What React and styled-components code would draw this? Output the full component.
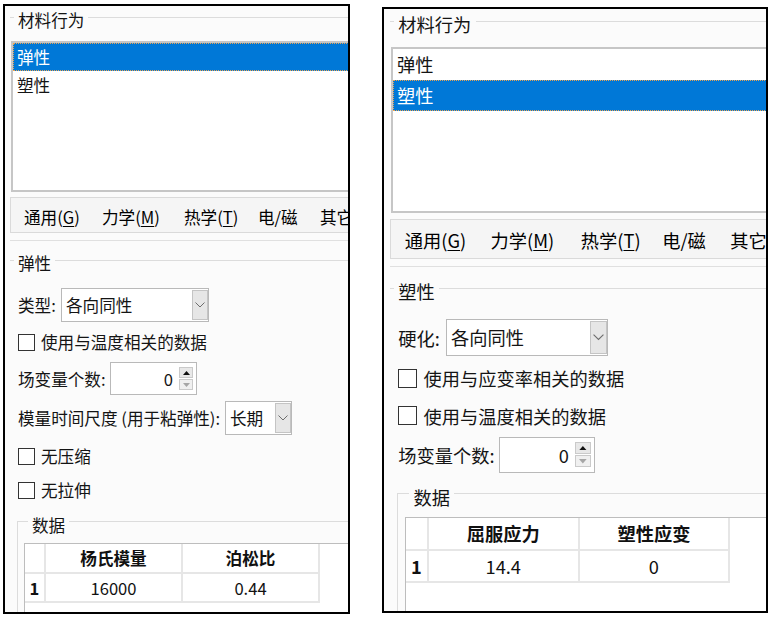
import React from "react";
import styled, { createGlobalStyle, css } from "styled-components";

const GlobalStyle = createGlobalStyle`
  html, body {
    margin: 0;
    padding: 0;
    background: #fff;
  }
  body {
    font-family: "Noto Sans CJK SC", "Microsoft YaHei", sans-serif;
    font-size: 16.6px;
    color: #141414;
  }
  * {
    box-sizing: border-box;
  }
`;

const Page = styled.div`
  display: flex;
  align-items: flex-start;
  width: 774px;
  height: 617px;
  padding: 4px 0 0 3px;
  overflow: hidden;
`;

const Slot = styled.div`
  padding-top: ${p => p.top || 0}px;
  margin-left: ${p => p.left || 0}px;
`;

const Panel = styled.div`
  zoom: ${p => p.zoom || 1};
  width: ${p => p.w}px;
  height: ${p => p.h}px;
  border: 2px solid #000;
  background: #fbfbfb;
  overflow: hidden;
  display: flex;
  flex-direction: column;
`;

const Group = styled.div`
  position: relative;
  flex: ${p => (p.grow ? 1 : "none")};
  display: flex;
  flex-direction: column;
  margin: ${p => p.mt || 0}px 0 0 ${p => p.ml || 0}px;
  padding-left: ${p => p.pl || 0}px;
  border-top: 1px solid #dcdcdc;
  border-left: ${p => (p.boxed ? "1px solid #dcdcdc" : "none")};
  min-height: 0;
`;

const GroupLabel = styled.span`
  position: absolute;
  left: ${p => p.left}px;
  top: ${p => p.top}px;
  padding: 0 4px;
  line-height: 20px;
  background: #fbfbfb;
  white-space: nowrap;
`;

const ListBox = styled.div`
  flex: none;
  width: 400px;
  height: 151px;
  margin: 23px 0 0 1px;
  background: #fff;
  border: 2px solid #c6c6c6;
`;

const ListItem = styled.div`
  height: 28px;
  line-height: 28px;
  padding-left: 4px;
  ${p =>
    p.selected &&
    css`
      background: #0078d7;
      color: #fff;
      outline: 1px dotted #e9a352;
      outline-offset: -1px;
    `}
`;

const TabBar = styled.div`
  flex: none;
  display: flex;
  align-items: center;
  height: 36px;
  margin: 5px 0 0 5px;
  padding: 3px 0 0 2px;
  background: #f5f5f5;
  border: 1px solid #dadada;
  border-right: none;
  white-space: nowrap;
`;

const Tab = styled.div`
  flex: none;
  width: ${p => (p.w ? `${p.w}px` : "auto")};
  padding-left: 11px;
  line-height: 20px;
  color: #000;

  u {
    text-decoration-thickness: 1px;
    text-underline-offset: 2px;
  }
`;

const Pane = styled.div`
  flex: 1;
  display: flex;
  flex-direction: column;
  min-height: 0;
  margin: 7px 0 0 5px;
  border-top: 1px solid #e0e0e0;
`;

const Row = styled.div`
  flex: none;
  display: flex;
  align-items: center;
  height: ${p => p.h}px;
  margin-top: ${p => p.mt}px;
  white-space: nowrap;
`;

const Label = styled.span`
  flex: none;
  width: ${p => (p.w ? `${p.w}px` : "auto")};
`;

const Select = styled.div`
  flex: none;
  display: flex;
  align-items: stretch;
  width: ${p => p.w}px;
  height: 34px;
  padding: 1px 0 1px 1px;
  background: #fff;
  border: 1px solid #b9b9b9;
`;

const SelectText = styled.span`
  flex: 1;
  padding-left: 3px;
  line-height: 30px;
`;

const SelectButton = styled.span`
  flex: none;
  display: flex;
  align-items: center;
  justify-content: center;
  width: 16px;
  background: #e6e6e6;
  border: 1px solid #c4c4c4;
`;

const Spin = styled.div`
  flex: none;
  display: flex;
  align-items: center;
  width: 87px;
  height: 33px;
  padding: 4px 3px 4px 0;
  background: #fff;
  border: 1px solid #b9b9b9;
`;

const SpinValue = styled.span`
  flex: 1;
  text-align: right;
  padding-right: 6px;
`;

const SpinButtons = styled.div`
  display: flex;
  flex-direction: column;
  justify-content: space-between;
  align-self: stretch;
  width: 14px;
`;

const SpinButton = styled.span`
  display: flex;
  align-items: center;
  justify-content: center;
  height: 11px;
  background: ${p => (p.off ? "#f0f0f0" : "#e8e8e8")};
  border: 1px solid #cacaca;
`;

const Check = styled.span`
  flex: none;
  width: 17px;
  height: 17px;
  margin-right: 6px;
  background: #fff;
  border: 1px solid #333;
`;

const Table = styled.div`
  flex: 1;
  display: grid;
  grid-template-columns: 21px 137px 137px;
  grid-template-rows: 30px 29px;
  align-content: start;
  width: 400px;
  margin: 21px 0 0 6px;
  background: #fff;
  border-top: 1px solid #bdbdbd;
  border-left: 1px solid #bdbdbd;
`;

const Cell = styled.div`
  display: flex;
  align-items: center;
  justify-content: center;
  border-right: 2px solid #e6e6e6;
  border-bottom: 2px solid #e6e6e6;
  font-weight: ${p => (p.bold ? 700 : 400)};
  color: #111;
`;

const Chevron = () => (
  <svg width="10" height="6" viewBox="0 0 10 6">
    <polyline points="0.5,0.5 5,5 9.5,0.5" fill="none" stroke="#6d6d6d" strokeWidth="1" />
  </svg>
);

const Arrow = ({ down }) => (
  <svg width="7" height="4" viewBox="0 0 7 4">
    <polygon
      points={down ? "0,0 7,0 3.5,4" : "0,4 7,4 3.5,0"}
      fill={down ? "#a6a6a6" : "#111"}
    />
  </svg>
);

const Dropdown = ({ w, value }) => (
  <Select w={w}>
    <SelectText>{value}</SelectText>
    <SelectButton>
      <Chevron />
    </SelectButton>
  </Select>
);

const Spinner = ({ value }) => (
  <Spin>
    <SpinValue>{value}</SpinValue>
    <SpinButtons>
      <SpinButton>
        <Arrow />
      </SpinButton>
      <SpinButton off>
        <Arrow down />
      </SpinButton>
    </SpinButtons>
  </Spin>
);

const CheckRow = ({ mt, children }) => (
  <Row h={18} mt={mt}>
    <Check />
    <span>{children}</span>
  </Row>
);

const tabs = [
  { w: 78, text: "通用(", key: "G" },
  { w: 82, text: "力学(", key: "M" },
  { w: 74, text: "热学(", key: "T" },
  { w: 62, text: "电/磁" },
  { text: "其它" },
];

const MaterialPanel = ({ zoom, w, h, selected, section, heads, values, children }) => (
  <Panel zoom={zoom} w={w} h={h}>
    <Group mt={11} ml={5}>
      <GroupLabel left={4} top={-8}>材料行为</GroupLabel>
      <ListBox>
        <ListItem selected={selected === 0}>弹性</ListItem>
        <ListItem selected={selected === 1}>塑性</ListItem>
      </ListBox>
    </Group>
    <TabBar>
      {tabs.map(t => (
        <Tab key={t.text} w={t.w}>
          {t.text}
          {t.key && (
            <>
              <u>{t.key}</u>)
            </>
          )}
        </Tab>
      ))}
    </TabBar>
    <Pane>
      <Group mt={19} pl={8} grow>
        <GroupLabel left={4} top={-8}>{section}</GroupLabel>
        {children}
        <Group mt={section === "弹性" ? 22 : 18} ml={-1} boxed grow>
          <GroupLabel left={10} top={-7}>数据</GroupLabel>
          <Table>
            <Cell />
            <Cell bold>{heads[0]}</Cell>
            <Cell bold>{heads[1]}</Cell>
            <Cell bold>1</Cell>
            <Cell>{values[0]}</Cell>
            <Cell>{values[1]}</Cell>
          </Table>
        </Group>
      </Group>
    </Pane>
  </Panel>
);

export default function App() {
  return (
    <>
      <GlobalStyle />
      <Page>
        <MaterialPanel
          w={347}
          h={610}
          selected={0}
          section="弹性"
          heads={["杨氏模量", "泊松比"]}
          values={["16000", "0.44"]}
        >
          <Row h={34} mt={27}>
            <Label w={43}>类型:</Label>
            <Dropdown w={148} value="各向同性" />
          </Row>
          <CheckRow mt={11}>使用与温度相关的数据</CheckRow>
          <Row h={33} mt={11}>
            <Label w={92}>场变量个数:</Label>
            <Spinner value="0" />
          </Row>
          <Row h={34} mt={6}>
            <Label w={207}>模量时间尺度 (用于粘弹性):</Label>
            <Dropdown w={67} value="长期" />
          </Row>
          <CheckRow mt={12}>无压缩</CheckRow>
          <CheckRow mt={16}>无拉伸</CheckRow>
        </MaterialPanel>
        <Slot top={3} left={32}>
          <MaterialPanel
            zoom={1.1}
            w={351}
            h={551}
            selected={1}
            section="塑性"
            heads={["屈服应力", "塑性应变"]}
            values={["14.4", "0"]}
          >
            <Row h={34} mt={27}>
              <Label w={43}>硬化:</Label>
              <Dropdown w={148} value="各向同性" />
            </Row>
            <CheckRow mt={11}>使用与应变率相关的数据</CheckRow>
            <CheckRow mt={16}>使用与温度相关的数据</CheckRow>
            <Row h={33} mt={10}>
              <Label w={92}>场变量个数:</Label>
              <Spinner value="0" />
            </Row>
          </MaterialPanel>
        </Slot>
      </Page>
    </>
  );
}
